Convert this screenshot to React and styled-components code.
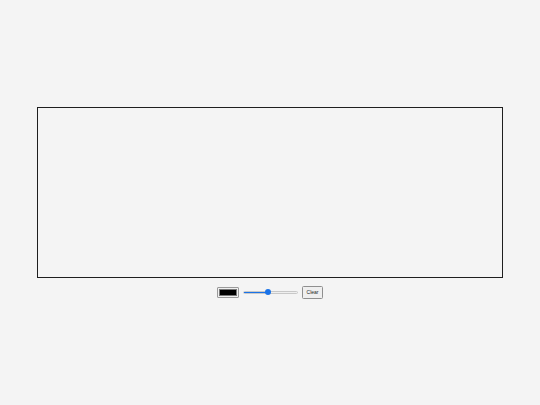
import { useState } from "react";
import styled, { createGlobalStyle } from "styled-components";

const GlobalStyle = createGlobalStyle`
  html, body {
    margin: 0;
    padding: 0;
    background: #f4f4f4;
    font-family: "Liberation Sans", Arial, sans-serif;
  }
`;

const Page = styled.div`
  width: 540px;
  height: 405px;
  display: flex;
  flex-direction: column;
  align-items: center;
  justify-content: center;
  gap: 8px;
`;

const Board = styled.canvas`
  display: block;
  width: 466px;
  height: 171px;
  box-sizing: border-box;
  border: 1px solid #1f1f1f;
  background: #f4f4f4;
`;

const Toolbar = styled.div`
  display: flex;
  align-items: center;
  gap: 4px;
  height: 13px;
`;

const ColorPick = styled.input`
  appearance: none;
  -webkit-appearance: none;
  width: 22px;
  height: 11px;
  padding: 1px;
  margin: 0;
  box-sizing: border-box;
  border: 1px solid #9a9a9a;
  border-radius: 1px;
  background: #efefef;
  cursor: pointer;
  &::-webkit-color-swatch-wrapper {
    padding: 0;
  }
  &::-webkit-color-swatch {
    border: 1px solid #777;
    border-radius: 0;
  }
`;

const Slider = styled.input`
  appearance: none;
  -webkit-appearance: none;
  width: 55px;
  height: 3px;
  margin: 0;
  border-radius: 2px;
  border: 0.5px solid #c8c8c8;
  box-sizing: border-box;
  &::-webkit-slider-thumb {
    -webkit-appearance: none;
    width: 6px;
    height: 6px;
    border-radius: 50%;
    background: #1a73e8;
    border: none;
  }
`;

const ClearButton = styled.button`
  width: 21px;
  height: 13px;
  padding: 0;
  margin: 0;
  font-family: "Liberation Sans", Arial, sans-serif;
  font-size: 5px;
  color: #222;
  background: #efefef;
  border: 1px solid #8f8f8f;
  border-radius: 1.5px;
  cursor: pointer;
`;

export default function App() {
  const [color, setColor] = useState("#000000");
  const [size, setSize] = useState(5);
  const pct = ((size - 1) / 9) * 100;

  return (
    <>
      <GlobalStyle />
      <Page>
        <Board width={466} height={171} />
        <Toolbar>
          <ColorPick type="color" value={color} onChange={(e) => setColor(e.target.value)} />
          <Slider
            type="range"
            min={1}
            max={10}
            value={size}
            onChange={(e) => setSize(Number(e.target.value))}
            style={{ background: `linear-gradient(to right, #1a73e8 ${pct}%, #efefef ${pct}%)` }}
          />
          <ClearButton>Clear</ClearButton>
        </Toolbar>
      </Page>
    </>
  );
}
